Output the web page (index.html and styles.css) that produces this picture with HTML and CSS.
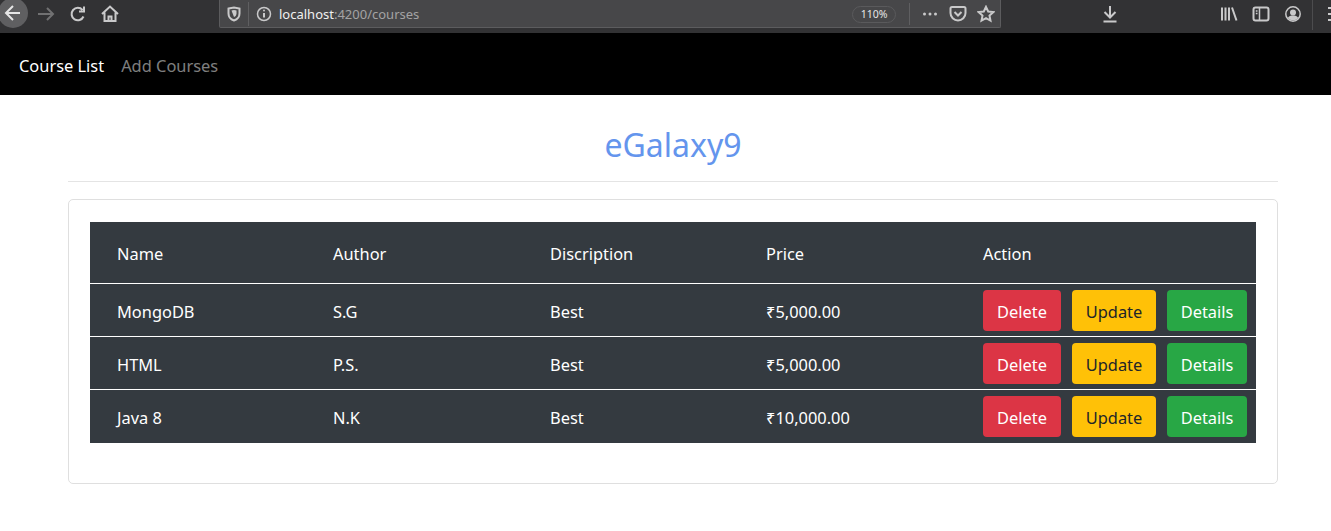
FILE: index.html
```html
<!DOCTYPE html>
<html lang="en">
<head>
  <meta charset="UTF-8">
  <meta name="viewport" content="width=device-width, initial-scale=1.0">
  <title>eGalaxy9</title>
  <link rel="stylesheet" href="styles.css">
</head>
<body>
  <div class="toolbar">
    <div class="tool tool-back">
      <svg width="20" height="20" viewBox="0 0 20 20"><path d="M17 10H3M10 3l-7 7 7 7" class="ic ic-bright"/></svg>
    </div>
    <div class="tool">
      <svg width="20" height="20" viewBox="0 0 20 20"><path d="M2 10h15M11 4l6 6-6 6" class="ic ic-dim"/></svg>
    </div>
    <div class="tool">
      <svg width="20" height="20" viewBox="0 0 20 20"><path d="M15.5 12.5a6.2 6.2 0 1 1-1-6.5M16 2.5V7.500h-5" class="ic"/></svg>
    </div>
    <div class="tool">
      <svg width="20" height="20" viewBox="0 0 20 20"><path d="M2 10l8-7.500 8 7.500M4.500 8.500V17h11V8.500M8.500 17v-4.500h3V17" class="ic"/></svg>
    </div>

    <div class="urlbar">
      <div class="url-shield">
        <svg width="16" height="16" viewBox="0 0 16 16"><path d="M2.500 2.500 8 1.500l5.500 1v5c0 3.500-2.500 6-5.500 7-3-1-5.500-3.500-5.500-7z" class="ic"/><path d="M5.500 4.500 8 4l2.500.5v3c0 1.500-1 3-2.500 3.500z" class="fill"/></svg>
      </div>
      <div class="url-info">
        <svg width="16" height="16" viewBox="0 0 16 16"><circle cx="8" cy="8" r="6.500" class="ic ic-thin"/><path d="M8 7v4.500" class="ic"/><circle cx="8" cy="4.600" r="1" class="fill"/></svg>
      </div>
      <div class="url-text">localhost<span class="url-rest">:4200/courses</span></div>
      <div class="zoom-pill">110%</div>
      <div class="url-sep"></div>
      <div class="url-tool">
        <svg width="16" height="16" viewBox="0 0 16 16"><circle cx="2.500" cy="8" r="1.500" class="fill"/><circle cx="8" cy="8" r="1.500" class="fill"/><circle cx="13.500" cy="8" r="1.500" class="fill"/></svg>
      </div>
      <div class="url-tool">
        <svg width="18" height="18" viewBox="0 0 18 18"><path d="M3 2h12a1.500 1.500 0 0 1 1.500 1.500V8a7.500 7.500 0 0 1-15 0V3.500A1.500 1.500 0 0 1 3 2z" class="ic"/><path d="M5.500 7 9 10.500 12.500 7" class="ic"/></svg>
      </div>
      <div class="url-tool">
        <svg width="18" height="18" viewBox="0 0 18 18"><path d="M9 1.800l2.200 4.700 5.100.6-3.800 3.500 1 5.100L9 13.200l-4.500 2.500 1-5.100-3.800-3.500 5.100-.6z" class="ic"/></svg>
      </div>
    </div>

    <div class="tool tool-download">
      <svg width="20" height="20" viewBox="0 0 20 20"><path d="M10 2v11M4.500 8l5.500 5.500L15.500 8M3.500 17.500h13" class="ic"/></svg>
    </div>
    <div class="tool tool-library">
      <svg width="18" height="18" viewBox="0 0 18 18"><path d="M2 2.500v13M5.500 2.500v13M9 2.500v13M12 2.500l4.500 13" class="ic"/></svg>
    </div>
    <div class="tool">
      <svg width="18" height="18" viewBox="0 0 18 18"><rect x="1.500" y="2.500" width="15" height="13" rx="2" class="ic"/><path d="M7.500 2.500v13M3.800 6h1.700M3.800 8.500h1.700" class="ic ic-thin"/></svg>
    </div>
    <div class="tool">
      <svg width="18" height="18" viewBox="0 0 18 18"><circle cx="9" cy="9" r="7.200" class="ic ic-thin"/><circle cx="9" cy="7.500" r="3" class="fill"/><path d="M3.800 13c1-2 3-2.500 5.200-2.500s4.200.5 5.200 2.500c-1.200 1.500-3.200 2.400-5.200 2.400s-4-.9-5.200-2.400z" class="fill"/></svg>
    </div>
    <div class="toolbar-sep"></div>
    <div class="menu-bars"><span></span><span></span><span></span></div>
  </div>

  <nav class="navbar">
    <a class="nav-link active" href="#">Course List</a>
    <a class="nav-link" href="#">Add Courses</a>
  </nav>

  <div class="container">
    <h1 class="page-title">eGalaxy9</h1>
    <hr class="divider">
    <div class="card">
      <table class="course-table">
        <colgroup>
          <col class="col-a">
          <col class="col-b">
          <col class="col-a">
          <col class="col-b">
          <col>
        </colgroup>
        <thead>
          <tr>
            <th>Name</th>
            <th>Author</th>
            <th>Discription</th>
            <th>Price</th>
            <th>Action</th>
          </tr>
        </thead>
        <tbody>
          <tr>
            <td>MongoDB</td>
            <td>S.G</td>
            <td>Best</td>
            <td>₹5,000.00</td>
            <td>
              <div class="actions">
                <button class="btn btn-delete">Delete</button>
                <button class="btn btn-update">Update</button>
                <button class="btn btn-details">Details</button>
              </div>
            </td>
          </tr>
          <tr>
            <td>HTML</td>
            <td>P.S.</td>
            <td>Best</td>
            <td>₹5,000.00</td>
            <td>
              <div class="actions">
                <button class="btn btn-delete">Delete</button>
                <button class="btn btn-update">Update</button>
                <button class="btn btn-details">Details</button>
              </div>
            </td>
          </tr>
          <tr>
            <td>Java 8</td>
            <td>N.K</td>
            <td>Best</td>
            <td>₹10,000.00</td>
            <td>
              <div class="actions">
                <button class="btn btn-delete">Delete</button>
                <button class="btn btn-update">Update</button>
                <button class="btn btn-details">Details</button>
              </div>
            </td>
          </tr>
        </tbody>
      </table>
    </div>
  </div>
</body>
</html>
```

FILE: styles.css
```css
* {
  box-sizing: border-box;
}

body {
  margin: 0;
  background-color: #ffffff;
  color: #212529;
  font-family: "Noto Sans", "Open Sans", sans-serif;
  font-size: 16px;
  overflow: hidden;
}

/* browser chrome */
.toolbar {
  display: flex;
  align-items: flex-start;
  height: 33px;
  background-color: #323234;
  overflow: hidden;
}

.tool {
  display: flex;
  flex: none;
  align-items: center;
  justify-content: center;
  width: 32px;
  height: 27px;
}

.tool-back {
  width: 30px;
  height: 30px;
  margin-top: -2px;
  margin-left: -2px;
  margin-right: 2px;
  border-radius: 50%;
  background-color: #5f5f61;
}

.tool-download {
  margin-left: 93px;
}

.tool-library {
  margin-left: 87px;
}

.ic {
  fill: none;
  stroke: #c9c9ca;
  stroke-width: 2;
}

.ic-bright {
  stroke: #e6e6e6;
}

.ic-dim {
  stroke: #717172;
}

.ic-thin {
  stroke-width: 1.500;
}

.fill {
  fill: #c9c9ca;
}

.urlbar {
  display: flex;
  flex: none;
  align-items: center;
  width: 782px;
  height: 28px;
  margin-left: 93px;
  background-color: #474749;
  border-right: 1px solid #5c5c5e;
  border-bottom: 1px solid #5c5c5e;
  border-left: 1px solid #5c5c5e;
  border-radius: 0 0 2px 2px;
}

.url-shield {
  display: flex;
  flex: none;
  align-items: center;
  justify-content: center;
  width: 29px;
  height: 24px;
  padding-right: 1px;
  border-right: 1px solid #5f5f61;
}

.url-info {
  display: flex;
  flex: none;
  justify-content: center;
  width: 29px;
}

.url-text {
  flex: 1;
  padding-top: 1px;
  padding-left: 1px;
  color: #f0f0f0;
  font-size: 13px;
}

.url-rest {
  color: #a3a3a4;
}

.zoom-pill {
  flex: none;
  width: 44px;
  height: 17px;
  margin-top: 2px;
  border: 1px solid #5a5a5c;
  border-radius: 9px;
  color: #e6e6e6;
  font-size: 10.500px;
  line-height: 15px;
  text-align: center;
}

.url-sep {
  flex: none;
  width: 1px;
  height: 22px;
  margin: 0 6px 0 13px;
  background-color: #5f5f61;
}

.url-tool {
  display: flex;
  flex: none;
  justify-content: center;
  width: 28px;
}

.toolbar-sep {
  flex: none;
  width: 1px;
  height: 30px;
  margin-left: 3px;
  background-color: #4c4c4e;
}

.menu-bars {
  display: flex;
  flex: none;
  flex-direction: column;
  gap: 4px;
  margin-top: 7px;
  margin-left: 15px;
}

.menu-bars span {
  display: block;
  width: 14px;
  height: 2px;
  background-color: #c9c9ca;
}

/* page */
.navbar {
  display: flex;
  gap: 17px;
  align-items: center;
  height: 62px;
  padding-top: 3px;
  padding-left: 19px;
  background-color: #000000;
}

.nav-link {
  color: rgba(255, 255, 255, 0.5);
  font-size: 16.400px;
  text-decoration: none;
}

.nav-link.active {
  color: #ffffff;
}

.container {
  width: 1210px;
  margin-left: 68px;
}

.page-title {
  margin: 0;
  padding-top: 26px;
  color: cornflowerblue;
  font-size: 32px;
  font-weight: 400;
  line-height: 48px;
  text-align: center;
}

.divider {
  height: 1px;
  margin: 12px 0 17px;
  border: 0;
  background-color: #e4e4e4;
}

.card {
  height: 285px;
  padding: 22px 21px;
  border: 1px solid #dfdfdf;
  border-radius: 5px;
}

.course-table {
  width: 100%;
  border-spacing: 0;
  table-layout: fixed;
  background-color: #343a40;
  color: #ffffff;
  font-size: 16.400px;
}

.col-a {
  width: 216px;
}

.col-b {
  width: 217px;
}

.course-table th,
.course-table td {
  padding: 2px 0 0 27px;
  font-weight: 400;
  text-align: left;
}

.course-table td {
  height: 53px;
  border-top: 1px solid #ffffff;
}

.course-table tr:last-child td {
  height: 54px;
  padding-bottom: 1px;
}

.course-table th {
  height: 61px;
}

.actions {
  display: flex;
  gap: 11px;
  margin-top: -1px;
}

.btn {
  height: 41px;
  padding: 2px 0 0;
  border: 0;
  border-radius: 4px;
  color: #ffffff;
  font-family: inherit;
  font-size: 16.400px;
}

.btn-delete {
  width: 78px;
  background-color: #dc3545;
}

.btn-update {
  width: 84px;
  background-color: #ffc107;
  color: #212529;
}

.btn-details {
  width: 80px;
  background-color: #28a745;
}
```
